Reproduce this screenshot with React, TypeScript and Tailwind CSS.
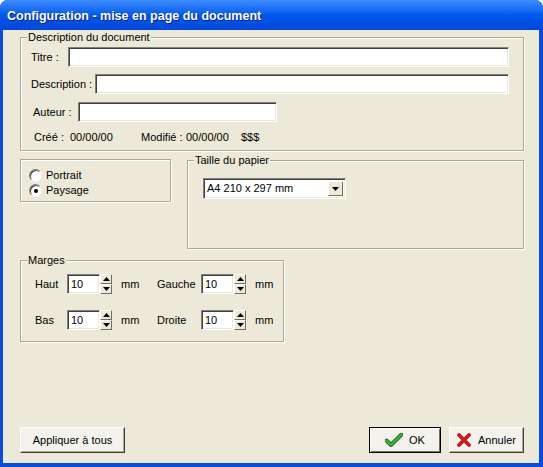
import React from 'react';

// Boîte de groupe (cadre gravé façon Windows)
function GroupBox({
  label,
  className,
  children,
}: {
  label?: string;
  className: string;
  children?: React.ReactNode;
}) {
  return (
    <div
      className={`relative border border-[#ACA899] shadow-[inset_1px_1px_0_#fff,1px_1px_0_#fff] ${className}`}
    >
      {label && (
        <span className="absolute left-[6px] top-[-8px] bg-[#ECE9D8] px-[1px] leading-[14px]">
          {label}
        </span>
      )}
      {children}
    </div>
  );
}

// Champ de saisie en creux
function Field({ className, value }: { className: string; value?: string }) {
  return (
    <div
      className={`flex items-center bg-white border border-t-[#808080] border-l-[#808080] border-b-white border-r-white shadow-[inset_1px_1px_0_#404040,inset_-1px_-1px_0_#ECE9D8] pl-[3px] ${className}`}
    >
      {value}
    </div>
  );
}

function Arrow({ up }: { up?: boolean }) {
  return (
    <svg width="7" height="4" viewBox="0 0 7 4">
      {up ? <path d="M0 4 L3.5 0 L7 4 Z" fill="#000" /> : <path d="M0 0 L3.5 4 L7 0 Z" fill="#000" />}
    </svg>
  );
}

function Spin() {
  return (
    <div className="flex items-center h-[20px] w-[45px]">
      <Field className="h-[20px] w-[33px]" value="10" />
      <div className="flex flex-col w-[12px] h-[20px]">
        <div className="flex-1 flex items-center justify-center bg-[#ECE9D8] border border-t-white border-l-white border-b-[#716F64] border-r-[#716F64]">
          <Arrow up />
        </div>
        <div className="flex-1 flex items-center justify-center bg-[#ECE9D8] border border-t-white border-l-white border-b-[#716F64] border-r-[#716F64]">
          <Arrow />
        </div>
      </div>
    </div>
  );
}

function Radio({ checked, label }: { checked?: boolean; label: string }) {
  return (
    <div className="flex items-center h-[15px]">
      <span className="flex items-center justify-center w-[13px] h-[13px] rounded-full bg-white border border-t-[#808080] border-l-[#808080] border-b-[#F4F3EE] border-r-[#F4F3EE] shadow-[inset_1px_1px_0_#404040]">
        {checked && <span className="w-[4px] h-[4px] rounded-full bg-black" />}
      </span>
      <span className="ml-[4px]">{label}</span>
    </div>
  );
}

export default function App() {
  return (
    <div className="w-[543px] h-[467px] bg-white font-['Liberation_Sans',Arial,sans-serif] text-[11px] text-black">
      <div className="flex flex-col h-full rounded-t-[8px] overflow-hidden bg-[#0B4CDC]">
        {/* Barre de titre */}
        <div className="h-[30px] flex items-center pl-[7px] pt-[2px] bg-gradient-to-b from-[#3D8DFF] via-[#0058EE] to-[#0047D9]">
          <span className="text-white font-bold text-[12.5px] [text-shadow:1px_1px_#0A1E8C]">
            Configuration - mise en page du document
          </span>
        </div>

        {/* Corps */}
        <div className="flex-1 flex flex-col ml-[3px] mr-[4px] mb-[4px] bg-[#ECE9D8] pl-[17px] pr-[15px]">
          {/* Description du document */}
          <GroupBox label="Description du document" className="mt-[7px] h-[114px] pt-[9px] pl-[10px] pr-[14px]">
            <div className="flex items-center h-[20px]">
              <span className="w-[37px]">Titre :</span>
              <Field className="flex-1 h-[20px]" />
            </div>
            <div className="flex items-center h-[20px] mt-[7px]">
              <span className="w-[64px]">Description :</span>
              <Field className="flex-1 h-[20px]" />
            </div>
            <div className="flex items-center h-[20px] mt-[8px] pl-[2px]">
              <span className="w-[45px]">Auteur :</span>
              <Field className="w-[199px] h-[20px]" />
            </div>
            <div className="flex items-center h-[14px] mt-[8px] pl-[3px]">
              <span className="w-[36px]">Créé :</span>
              <span className="w-[71px]">00/00/00</span>
              <span className="w-[45px]">Modifié :</span>
              <span className="w-[55px]">00/00/00</span>
              <span>$$$</span>
            </div>
          </GroupBox>

          <div className="flex items-start mt-[8px]">
            {/* Orientation */}
            <GroupBox className="w-[151px] h-[43px] pt-[8px] pl-[8px]">
              <Radio label="Portrait" />
              <Radio label="Paysage" checked />
            </GroupBox>

            {/* Taille du papier */}
            <GroupBox label="Taille du papier" className="flex-1 ml-[16px] mt-[1px] h-[89px] pt-[17px] pl-[15px]">
              <div className="flex items-center w-[143px] h-[21px] bg-white border border-t-[#808080] border-l-[#808080] border-b-white border-r-white shadow-[inset_1px_1px_0_#404040,inset_-1px_-1px_0_#ECE9D8] p-[2px]">
                <span className="flex-1 pl-[1px]">A4 210 x 297 mm</span>
                <div className="flex items-center justify-center w-[15px] h-full bg-[#ECE9D8] border border-t-white border-l-white border-b-[#716F64] border-r-[#716F64]">
                  <Arrow />
                </div>
              </div>
            </GroupBox>
          </div>

          {/* Marges */}
          <GroupBox label="Marges" className="mt-[11px] w-[264px] h-[82px] pt-[13px] pl-[14px]">
            <div className="flex items-center h-[20px]">
              <span className="w-[32px]">Haut</span>
              <Spin />
              <span className="ml-[9px] w-[36px]">mm</span>
              <span className="w-[44px]">Gauche</span>
              <Spin />
              <span className="ml-[9px]">mm</span>
            </div>
            <div className="flex items-center h-[20px] mt-[16px]">
              <span className="w-[32px]">Bas</span>
              <Spin />
              <span className="ml-[9px] w-[36px]">mm</span>
              <span className="w-[44px]">Droite</span>
              <Spin />
              <span className="ml-[9px]">mm</span>
            </div>
          </GroupBox>

          <div className="flex-1" />

          {/* Boutons */}
          <div className="flex items-center h-[26px] mb-[10px]">
            <button className="w-[105px] h-[26px] bg-[#F3F2EC] border border-t-white border-l-white border-b-[#404040] border-r-[#404040] shadow-[inset_-1px_-1px_0_#ACA899]">
              Appliquer à tous
            </button>
            <div className="flex-1" />
            <button className="flex items-center justify-center w-[72px] h-[26px] bg-[#F3F2EC] border border-black shadow-[inset_1px_1px_0_#fff,inset_-1px_-1px_0_#716F64]">
              <svg width="18" height="14" viewBox="0 0 18 14" className="mr-[6px]">
                <path d="M1.5 7.5 L6 12 L16.5 1.5" fill="none" stroke="#1E6E1E" strokeWidth="4" strokeLinecap="round" strokeLinejoin="round" />
                <path d="M1.5 7.5 L6 12 L16.5 1.5" fill="none" stroke="#3CB43C" strokeWidth="2.2" strokeLinecap="round" strokeLinejoin="round" />
              </svg>
              <span>OK</span>
            </button>
            <button className="ml-[8px] flex items-center justify-center w-[75px] h-[26px] bg-[#F3F2EC] border border-t-white border-l-white border-b-[#404040] border-r-[#404040] shadow-[inset_-1px_-1px_0_#ACA899]">
              <svg width="14" height="14" viewBox="0 0 14 14" className="mr-[7px]">
                <path d="M2 2 L12 12 M12 2 L2 12" fill="none" stroke="#A00C0C" strokeWidth="3.6" strokeLinecap="round" />
                <path d="M2 2 L12 12 M12 2 L2 12" fill="none" stroke="#D82020" strokeWidth="2" strokeLinecap="round" />
              </svg>
              <span>Annuler</span>
            </button>
          </div>
        </div>
      </div>
    </div>
  );
}
